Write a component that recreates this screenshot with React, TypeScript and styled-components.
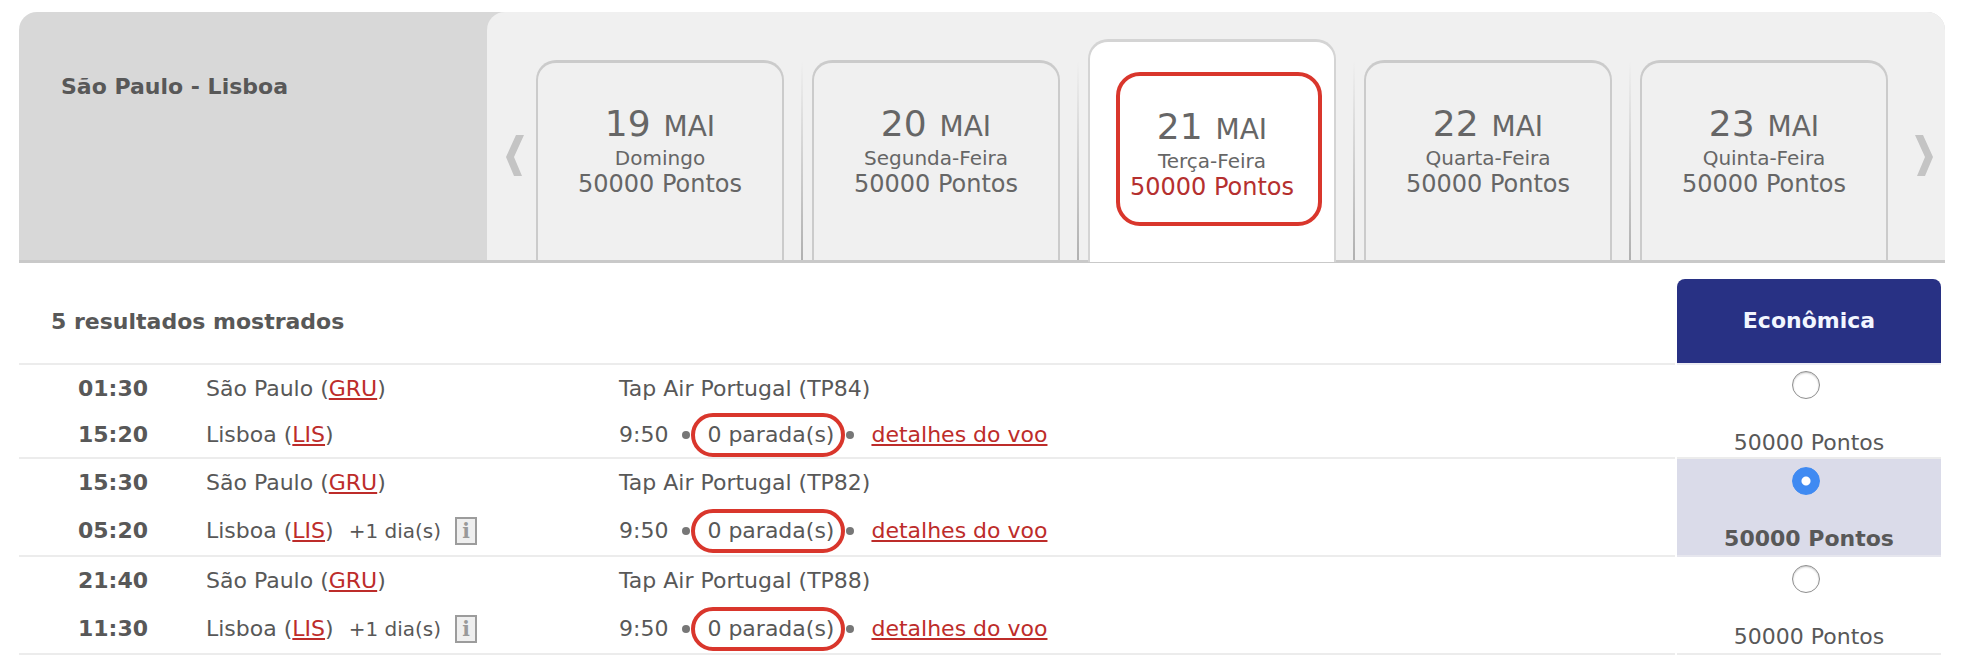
import React, { useState } from "react";
import styled, { createGlobalStyle, css } from "styled-components";

const GlobalStyle = createGlobalStyle`
  *, *::before, *::after { box-sizing: border-box; }
  body {
    margin: 0;
    background: #fff;
    color: #585858;
    font-family: Verdana, "DejaVu Sans", sans-serif;
    font-size: 22px;
    line-height: 26px;
  }
  button { font: inherit; color: inherit; border: 0; padding: 0; background: none; cursor: pointer; }
`;

const Page = styled.main`
  height: 100vh;
  overflow: hidden;
  padding: 12px 27px 0 19px;
`;

const DateBar = styled.section`
  display: flex;
  background: #d8d8d8;
  border-bottom: 3px solid #c9c9c9;
  border-radius: 18px 18px 0 0;
`;

const Route = styled.h1`
  flex: 0 0 468px;
  margin: 0;
  padding: 62px 0 0 42px;
  font-size: 22px;
  line-height: 26px;
`;

const Carousel = styled.div`
  flex: 1;
  display: flex;
  align-items: flex-end;
  padding-top: 27px;
  background: #f0f0f0;
  border-radius: 18px 18px 0 0;
`;

const Arrow = styled.button<{ $side: "left" | "right" }>`
  display: flex;
  align-self: flex-end;
  flex: 0 0 ${(p) => (p.$side === "left" ? 49 : 57)}px;
  justify-content: ${(p) => (p.$side === "left" ? "flex-start" : "flex-end")};
  padding: ${(p) => (p.$side === "left" ? "0 0 84px 19px" : "0 12px 84px 0")};
`;

const Tab = styled.button<{ $active: boolean }>`
  position: relative;
  flex: 1;
  display: flex;
  flex-direction: column;
  align-items: center;
  padding: 39px 0 62px;
  color: #666;
  border: 2px solid #cbcbcb;
  border-top-width: 3px;
  border-bottom: 0;
  border-radius: 20px 20px 0 0;
  ${(p) =>
    p.$active &&
    css`
      padding: 63px 0 61px;
      margin-bottom: -2px;
      background: #fff;
      border-color: #d4d4d4;
    `}
`;

const Divider = styled.span`
  align-self: flex-end;
  width: 2px;
  height: 199px;
  margin: 0 9px 0 17px;
  background: linear-gradient(#f0f0f0, #b0b0b0);
`;

const DayMonth = styled.span`
  font-size: 28px;
  line-height: 24px;
  white-space: pre;
`;

const Day = styled.span`
  font-size: 36px;
  line-height: 44px;
  margin-right: 4px;
`;

const Weekday = styled.span`
  font-size: 20px;
  line-height: 24px;
`;

const TabPoints = styled.span<{ $active: boolean }>`
  font-size: 24px;
  line-height: 28px;
  color: ${(p) => (p.$active ? "#b5302f" : "inherit")};
`;

const TabHighlight = styled.span`
  position: absolute;
  top: 30px;
  left: 26px;
  right: 12px;
  height: 154px;
  border: 4px solid #d9362c;
  border-radius: 24px;
`;

const Results = styled.table`
  width: calc(100% - 4px);
  margin-top: 16px;
  table-layout: fixed;
  border-collapse: separate;
  border-spacing: 0;
`;

const TimeCol = styled.col`
  width: 187px;
`;
const PlaceCol = styled.col`
  width: 413px;
`;
const FlightCol = styled.col``;
const GapCol = styled.col`
  width: 2px;
`;
const FareCol = styled.col`
  width: 264px;
`;

const Count = styled.th`
  padding: 2px 0 0 32px;
  text-align: left;
  border-bottom: 2px solid #ececec;
`;

const FareHead = styled.th`
  height: 86px;
  padding: 0;
  color: #f2f6ff;
  background: #283184 padding-box;
  border-bottom: 2px solid #ececf2;
  border-radius: 8px 8px 0 0;
`;

const Cell = styled.td<{ $indent?: number; $bold?: boolean }>`
  padding: 0 0 0 ${(p) => p.$indent ?? 0}px;
  vertical-align: top;
  font-weight: ${(p) => (p.$bold ? 700 : 400)};
  border-bottom: 2px solid #ececec;
`;

const Gap = styled.td`
  padding: 0;
`;

const FareCell = styled.td<{ $selected: boolean }>`
  padding: 6px 0 1px;
  border-bottom: 2px solid ${(p) => (p.$selected ? "#e6e6ee" : "#ececec")};
  background: ${(p) => (p.$selected ? "#dadbe9" : "transparent")};
  font-weight: ${(p) => (p.$selected ? 700 : 400)};
`;

const Line = styled.div<{ $tall?: boolean }>`
  display: flex;
  align-items: center;
  height: ${(p) => (p.$tall ? 48 : 44)}px;
  white-space: pre;
`;

const Link = styled.a`
  color: #bd2c2a;
  text-decoration: underline;
  text-decoration-thickness: 2px;
  text-underline-offset: 2px;
  text-decoration-skip-ink: none;
`;

const ExtraDay = styled.span`
  margin-left: 15px;
  font-size: 20px;
`;

const Info = styled.button`
  width: 22px;
  height: 28px;
  margin-left: 14px;
  border: 2px solid #9c9c9c;
  background: #efefef;
  color: #999;
  font: bold 20px/20px "DejaVu Serif", serif;
`;

const Dot = styled.span`
  width: 8px;
  height: 8px;
  border-radius: 50%;
  background: #777;
`;

const Duration = styled.span`
  margin-right: 14px;
`;

const Stops = styled.span`
  height: 44px;
  margin: 0 1px;
  padding: 0 7px 0 12px;
  line-height: 36px;
  border: 4px solid #d9362c;
  border-radius: 22px;
`;

const Details = styled(Link)`
  margin-left: 17px;
`;

const Fare = styled.label`
  display: flex;
  flex-direction: column;
  align-items: center;
  gap: 31px;
  cursor: pointer;
`;

const Radio = styled.input`
  appearance: none;
  width: 28px;
  height: 28px;
  margin: 0 6px 0 0;
  border: 1px solid #8f8f8f;
  border-radius: 50%;
  background: #fff;
  box-shadow: inset 0 1px 2px #c4c4c4;
  &:checked {
    border-color: #3f8af2;
    background: radial-gradient(circle, #fff 0 4px, #3f8af2 5px);
    box-shadow: none;
  }
`;

const days = [
  { day: "19", weekday: "Domingo" },
  { day: "20", weekday: "Segunda-Feira" },
  { day: "21", weekday: "Terça-Feira" },
  { day: "22", weekday: "Quarta-Feira" },
  { day: "23", weekday: "Quinta-Feira" },
];

const flights = [
  { code: "TP84", departs: "01:30", arrives: "15:20", nextDay: false },
  { code: "TP82", departs: "15:30", arrives: "05:20", nextDay: true },
  { code: "TP88", departs: "21:40", arrives: "11:30", nextDay: true },
];

function Chevron({ flip }: { flip?: boolean }) {
  return (
    <svg width="18" height="41" viewBox="0 0 18 41" aria-hidden="true">
      <path
        d={flip ? "M0 0H8L18 22L10 41H2L10 22Z" : "M18 0H10L0 22L8 41H16L8 22Z"}
        fill="#c4c4c4"
      />
    </svg>
  );
}

export default function App() {
  const [date, setDate] = useState("21");
  const [selected, setSelected] = useState("TP82");

  return (
    <Page>
      <GlobalStyle />
      <DateBar>
        <Route>São Paulo - Lisboa</Route>
        <Carousel>
          <Arrow $side="left" aria-label="Datas anteriores">
            <Chevron />
          </Arrow>
          {days.map(({ day, weekday }, i) => (
            <React.Fragment key={day}>
              {i > 0 && <Divider />}
              <Tab $active={day === date} onClick={() => setDate(day)}>
                <DayMonth>
                  <Day>{day}</Day> MAI
                </DayMonth>
                <Weekday>{weekday}</Weekday>
                <TabPoints $active={day === date}>50000 Pontos</TabPoints>
                {day === date && <TabHighlight />}
              </Tab>
            </React.Fragment>
          ))}
          <Arrow $side="right" aria-label="Próximas datas">
            <Chevron flip />
          </Arrow>
        </Carousel>
      </DateBar>

      <Results>
        <colgroup>
          <TimeCol />
          <PlaceCol />
          <FlightCol />
          <GapCol />
          <FareCol />
        </colgroup>
        <thead>
          <tr>
            <Count colSpan={3}>5 resultados mostrados</Count>
            <Gap />
            <FareHead scope="col">Econômica</FareHead>
          </tr>
        </thead>
        <tbody>
          {flights.map((f) => (
            <tr key={f.code}>
              <Cell $indent={59} $bold>
                <Line $tall>{f.departs}</Line>
                <Line $tall={f.nextDay}>{f.arrives}</Line>
              </Cell>
              <Cell>
                <Line $tall>
                  São Paulo (<Link href="#GRU">GRU</Link>)
                </Line>
                <Line $tall={f.nextDay}>
                  Lisboa (<Link href="#LIS">LIS</Link>)
                  {f.nextDay && (
                    <>
                      <ExtraDay>+1 dia(s)</ExtraDay>
                      <Info>i</Info>
                    </>
                  )}
                </Line>
              </Cell>
              <Cell>
                <Line $tall>Tap Air Portugal ({f.code})</Line>
                <Line $tall={f.nextDay}>
                  <Duration>9:50</Duration>
                  <Dot />
                  <Stops>0 parada(s)</Stops>
                  <Dot />
                  <Details href={`#${f.code}`}>detalhes do voo</Details>
                </Line>
              </Cell>
              <Gap />
              <FareCell $selected={selected === f.code}>
                <Fare>
                  <Radio
                    type="radio"
                    name="fare"
                    checked={selected === f.code}
                    onChange={() => setSelected(f.code)}
                  />
                  50000 Pontos
                </Fare>
              </FareCell>
            </tr>
          ))}
          <tr>
            <Cell colSpan={3} />
            <Gap />
            <FareCell $selected={selected === "next"}>
              <Fare>
                <Radio
                  type="radio"
                  name="fare"
                  aria-label="Econômica"
                  checked={selected === "next"}
                  onChange={() => setSelected("next")}
                />
              </Fare>
            </FareCell>
          </tr>
        </tbody>
      </Results>
    </Page>
  );
}
